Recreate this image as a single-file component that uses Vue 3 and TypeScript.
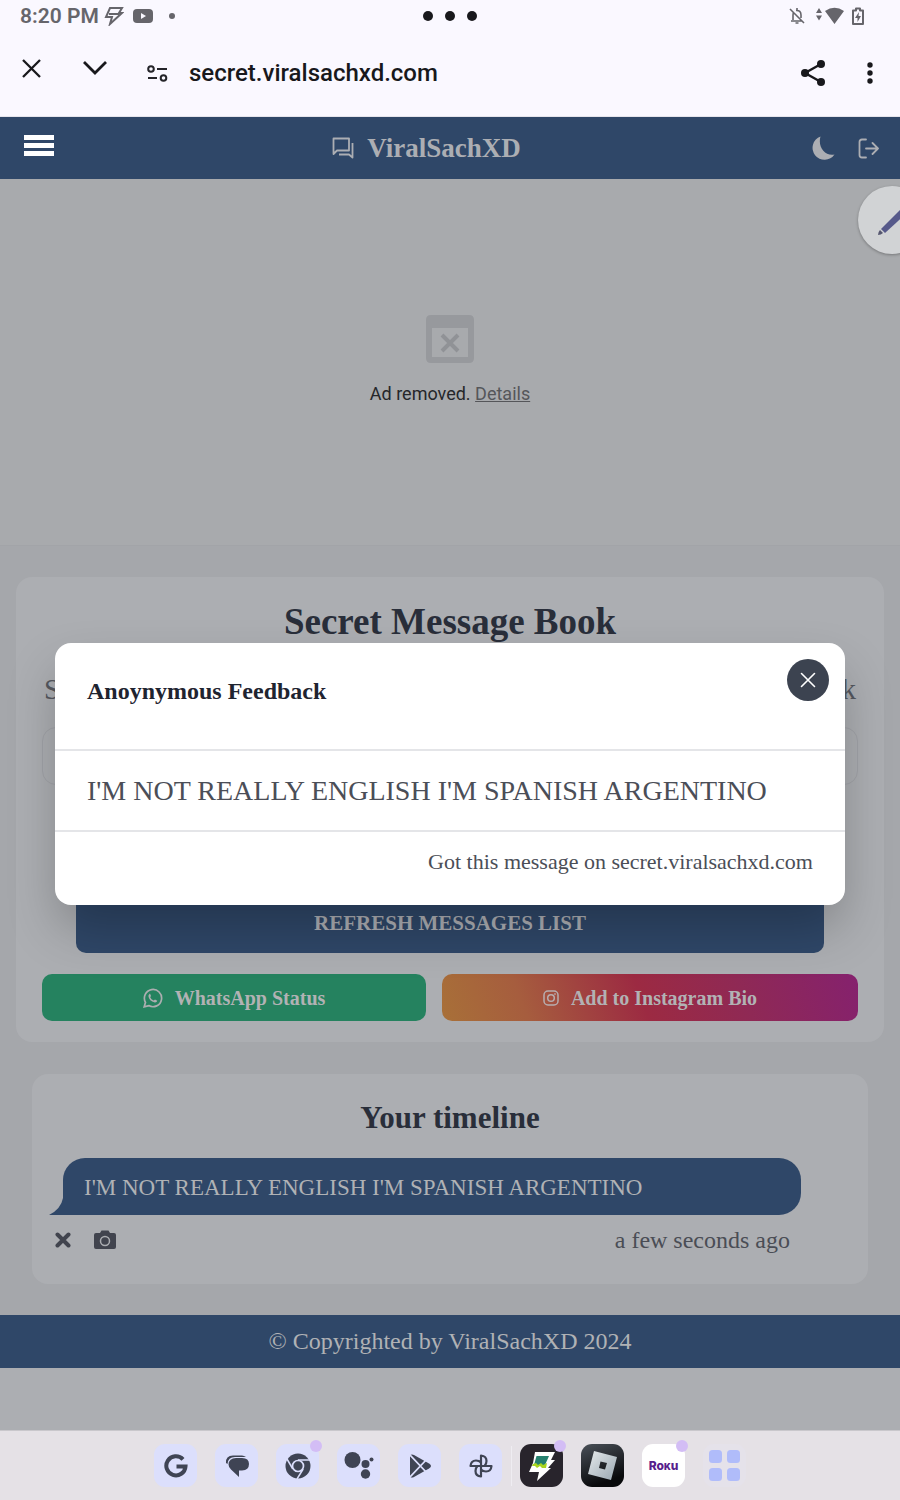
<script setup lang="ts">
import { ref } from 'vue'

const message = "I'M NOT REALLY ENGLISH I'M SPANISH ARGENTINO"
const site = 'secret.viralsachxd.com'
const modalOpen = ref(true)
const link = ref('')

interface DockApp {
  id: string
  label: string
  kind: 'plain' | 'dark' | 'metal' | 'white' | 'none'
  dot?: boolean
}

const apps: DockApp[] = [
  { id: 'google', label: 'Google', kind: 'plain' },
  { id: 'messages', label: 'Messages', kind: 'plain' },
  { id: 'chrome', label: 'Chrome', kind: 'plain', dot: true },
  { id: 'assistant', label: 'Assistant', kind: 'plain' },
  { id: 'play', label: 'Play Store', kind: 'plain' },
  { id: 'photos', label: 'Photos', kind: 'plain' },
  { id: 'bolt', label: 'Bolt', kind: 'dark', dot: true },
  { id: 'roblox', label: 'Roblox', kind: 'metal' },
  { id: 'roku', label: 'Roku', kind: 'white', dot: true },
  { id: 'all', label: 'All apps', kind: 'none' },
]
</script>

<template>
  <div class="screen">
    <header class="topbar">
      <div class="status">
        <div class="status-side">
          <span class="time">8:20 PM</span>
          <svg width="20" height="20" viewBox="0 0 20 20" fill="none" stroke="#66656b" stroke-width="2"><path d="M6 2h12l-3 5h3L6 18l2-7H2L6 2Z M5 8h10" /></svg>
          <svg class="tube" width="20" height="16" viewBox="0 0 20 16"><rect y="1" width="20" height="14" rx="4" fill="#66656b" /><path d="M8 5l5 3-5 3z" fill="#faf8ff" /></svg>
          <span class="tiny-dot"></span>
        </div>
        <div class="handle"><i></i><i></i><i></i></div>
        <div class="status-side right">
          <svg width="18" height="18" viewBox="0 0 18 18" fill="none" stroke="#66656b" stroke-width="1.600"><path d="M2 2l14 14M3 14h11M5 13V8q0-2 1-3M8 3.500Q13 3 13 8v3M9 1v2M7.500 16h3" /></svg>
          <svg class="wifi" width="28" height="18" viewBox="0 0 28 18" fill="#66656b"><path d="M3 1l3 5H0zM0 8.500h6l-3 5zM9 4q9.500-6.500 19 0L18.500 17z" /></svg>
          <svg width="12" height="18" viewBox="0 0 12 18"><path d="M4 1.500h4v2h3V17H1V3.500h3z" fill="none" stroke="#66656b" stroke-width="2" stroke-linejoin="round" /><path d="M7 5l-4 6h2.500v4L9 9H6.500z" fill="#66656b" /></svg>
        </div>
      </div>
      <div class="address">
        <button class="icon-btn close-tab" aria-label="Close tab">
          <svg width="19" height="19" viewBox="0 0 19 19" fill="none" stroke="#18181c" stroke-width="2.300"><path d="M1 1l17 17M18 1L1 18" /></svg>
        </button>
        <button class="icon-btn collapse" aria-label="Minimize">
          <svg width="24" height="14" viewBox="0 0 24 14" fill="none" stroke="#18181c" stroke-width="2.800"><path d="M1 1l11 11L23 1" /></svg>
        </button>
        <button class="icon-btn tune" aria-label="Site settings">
          <svg width="21" height="17" viewBox="0 0 21 17" fill="none" stroke="#242429" stroke-width="2"><circle cx="4" cy="4" r="2.800" /><path d="M10 4h10M1 13h9" /><circle cx="16.500" cy="13" r="2.800" /></svg>
        </button>
        <span class="url">{{ site }}</span>
        <button class="icon-btn share" aria-label="Share">
          <svg width="26" height="28" viewBox="0 0 26 28" fill="#18181c"><path d="M21 5L5 14l16 9" fill="none" stroke="#18181c" stroke-width="2.400" /><circle cx="21" cy="5" r="4" /><circle cx="5" cy="14" r="4" /><circle cx="21" cy="23" r="4" /></svg>
        </button>
        <button class="icon-btn" aria-label="More">
          <svg width="6" height="22" viewBox="0 0 6 22" fill="#18181c"><circle cx="3" cy="3" r="2.700" /><circle cx="3" cy="11" r="2.700" /><circle cx="3" cy="19" r="2.700" /></svg>
        </button>
      </div>
    </header>

    <div class="view">
      <nav class="navbar">
        <button class="icon-btn menu" aria-label="Menu">
          <svg width="30" height="21" viewBox="0 0 30 21" fill="#fff"><path d="M0 0h30v5H0zM0 8h30v5H0zM0 16h30v5H0z" /></svg>
        </button>
        <a class="brand" href="#">
          <svg width="23" height="22" viewBox="0 0 23 22" fill="none" stroke="#acaeb3" stroke-width="1.800" stroke-linejoin="round"><path d="M1.500 1.500h15.500v12H5l-3.500 3.500zM20.500 6v14.500L17 17.500H7" /></svg>
          <span>ViralSachXD</span>
        </a>
        <div class="nav-actions">
          <button class="icon-btn" aria-label="Dark mode">
            <svg width="24" height="25" viewBox="0 0 24 25" fill="#acaeb3"><path d="M9.500.5A12 12 0 1 0 23.500 18.500C14 20.500 6.500 11 9.500.5Z" /></svg>
          </button>
          <button class="icon-btn" aria-label="Log out">
            <svg width="21" height="21" viewBox="0 0 21 21" fill="none" stroke="#acaeb3" stroke-width="1.800" stroke-linejoin="round" stroke-linecap="round"><path d="M8 1.500H4q-2.500 0-2.500 2.500v13q0 2.500 2.500 2.500h4M8 10.500h12M14.500 5l5.500 5.500-5.500 5.500" /></svg>
          </button>
        </div>
      </nav>

      <section class="ad">
        <svg width="48" height="48" viewBox="0 0 48 48"><path fill-rule="evenodd" d="M5 0h38q5 0 5 5v38q0 5-5 5H5q-5 0-5-5V5q0-5 5-5zM6 13v29h36V13z" fill="#97999d" /><path d="M16 20l16 16M32 20L16 36" stroke="#909296" stroke-width="4" /></svg>
        <p>Ad removed. <a href="#">Details</a></p>
      </section>

      <main class="content">
        <section class="card book">
          <h1>Secret Message Book</h1>
          <p class="lead"><span>S</span><span>k</span></p>
          <input v-model="link" class="link" type="text" aria-label="Link" />
          <button class="refresh">REFRESH MESSAGES LIST</button>
          <div class="social">
            <button class="whatsapp">
              <svg width="20" height="20" viewBox="0 0 20 20" fill="none" stroke="#acaeb0" stroke-width="1.700"><path d="M1.200 18.800l1.300-4.500A8.600 8.600 0 1 1 5.800 17.600z" /><path d="M7 5.500l1 2.500-.8 1.200q1 2.200 3.500 3.400L12 11.500l2.300 1.200q-.5 2-2.500 1.800Q6 13 5.400 8q0-1.500 1.600-2.500z" fill="#acaeb0" stroke="none" /></svg>
              <span>WhatsApp Status</span>
            </button>
            <button class="instagram">
              <svg width="16" height="16" viewBox="0 0 16 16" fill="none" stroke="#b8aeb0" stroke-width="1.500"><rect x="1" y="1" width="14" height="14" rx="4" /><circle cx="8" cy="8" r="3.300" /><circle cx="12" cy="4" r=".5" fill="#b8aeb0" stroke-width=".8" /></svg>
              <span>Add to Instagram Bio</span>
            </button>
          </div>
        </section>

        <section class="card timeline">
          <h2>Your timeline</h2>
          <div class="bubble">
            {{ message }}
            <svg class="tail" width="20" height="30" viewBox="0 0 20 30"><path d="M14 0v13Q12 24 0 30h20V0z" fill="#2f4768" /></svg>
          </div>
          <div class="meta">
            <button class="icon-btn" aria-label="Delete">
              <svg width="16" height="16" viewBox="0 0 16 16" fill="none" stroke="#41444e" stroke-width="4" stroke-linecap="round"><path d="M2.500 2.500l11 11M13.500 2.500l-11 11" /></svg>
            </button>
            <button class="icon-btn" aria-label="Screenshot">
              <svg width="22" height="20" viewBox="0 0 22 20"><path d="M2 3h4l1.500-2.500h7L16 3h4q2 0 2 2v12q0 2-2 2H2q-2 0-2-2V5q0-2 2-2z" fill="#41444e" /><circle cx="11" cy="11" r="4.500" fill="none" stroke="#acaeb2" stroke-width="1.500" /></svg>
            </button>
            <time>a few seconds ago</time>
          </div>
        </section>
      </main>

      <footer class="footer">© Copyrighted by ViralSachXD 2024</footer>

      <button class="floating" aria-label="Edit">
        <svg width="34" height="34" viewBox="0 0 34 34"><path d="M1 32q0-3 2-5l3 3q-2 2-5 2z" fill="#55566f" /><path d="M4 26L28 2l5 5L8 30z" fill="#56598a" /></svg>
      </button>

      <div v-if="modalOpen" class="overlay">
        <div class="modal" role="dialog" aria-labelledby="modal-title">
          <div class="modal-head">
            <h3 id="modal-title">Anoynymous Feedback</h3>
            <button class="modal-close" aria-label="Close" @click="modalOpen = false">
              <svg width="16" height="16" viewBox="0 0 16 16" fill="none" stroke="#fff" stroke-width="1.600" stroke-linecap="round"><path d="M1.500 1.500l13 13M14.500 1.500l-13 13" /></svg>
            </button>
          </div>
          <p class="modal-body">{{ message }}</p>
          <p class="modal-foot">Got this message on {{ site }}</p>
        </div>
      </div>
    </div>

    <div class="dock">
      <button v-for="app in apps" :key="app.id" class="app" :class="app.kind" :aria-label="app.label">
        <svg v-if="app.id === 'google'" width="24" height="24" viewBox="0 0 24 24"><path d="M19 5.300A9.600 9.600 0 1 0 21.500 12.500H12.500" fill="none" stroke="#3f4454" stroke-width="4" /></svg>
        <svg v-else-if="app.id === 'messages'" width="24" height="24" viewBox="0 0 24 24"><path d="M11 4h6q7 0 7 6t-7 6.500h-3V23l-8-7.500Q3.500 13 3.500 10.500 4 4 11 4z" fill="#3f4454" /><path d="M1 9Q.5 1.500 8 1.500h9q2 0 4 1.500H10Q3 3 2.500 10z" fill="#3f4454" /></svg>
        <svg v-else-if="app.id === 'chrome'" width="26" height="26" viewBox="0 0 26 26"><circle cx="13" cy="13" r="12.500" fill="#3f4454" /><path d="M13 7h12M7.800 16L2 6M18.200 16L12 26" stroke="#dcdffc" stroke-width="1.500" /><circle cx="13" cy="13" r="5.500" fill="#3f4454" stroke="#dcdffc" stroke-width="1.700" /></svg>
        <svg v-else-if="app.id === 'assistant'" width="30" height="27" viewBox="0 0 30 27" fill="#3f4454"><circle cx="8.500" cy="8" r="8" /><circle cx="21.500" cy="12" r="4" /><circle cx="27.500" cy="7.500" r="2" /><circle cx="21.500" cy="22" r="4.700" /></svg>
        <svg v-else-if="app.id === 'play'" width="22" height="24" viewBox="0 0 22 24"><path d="M1 1q2-1 4 0l15 8.500q4 2.500 0 5L5 23q-2 1-4 0z" fill="#3f4454" /><path d="M0 0l18 19M0 24L18 5" stroke="#dcdffc" stroke-width="1.800" /></svg>
        <svg v-else-if="app.id === 'photos'" width="24" height="24" viewBox="0 0 24 24" fill="none" stroke="#3f4454" stroke-width="2.200" stroke-linejoin="round"><path d="M12 12V1.500q5.500.5 5.500 5.500 0 3-2 5M12 12h10.500q-.5 5.500-5.500 5.500-3 0-5-2M12 12v10.500q-5.500-.5-5.500-5.500 0-3 2-5M12 12H1.500Q2 6.500 7 6.500q3 0 5 2" /></svg>
        <svg v-else-if="app.id === 'bolt'" width="28" height="30" viewBox="0 0 28 30"><path d="M7 1h20l-4 8h4l-7 8h3L9 30l2-9H1l4-9z" fill="#fff" /><path d="M8.500 5H21l-4 9H6z" fill="#25806f" /><path d="M5 13l3-1 2 2 3-2 2 2 4-2-1 5h-4l-2-2-3 2-2-2H4z" fill="#a9d51f" /></svg>
        <svg v-else-if="app.id === 'roblox'" width="31" height="31" viewBox="0 0 31 31"><defs><linearGradient id="steel" x1="0" y1="0" x2="1" y2="1"><stop offset="0" stop-color="#e6eaec" /><stop offset="1" stop-color="#98a6b0" /></linearGradient></defs><path fill-rule="evenodd" d="M7 1l23 6-6 23-23-6zM13.500 11.500l-1.500 6.500 6 1.500 2-6.500z" fill="url(#steel)" /></svg>
        <span v-else-if="app.id === 'roku'" class="roku-name">Ro<b>K</b>u</span>
        <svg v-else width="31" height="31" viewBox="0 0 31 31" fill="#b0bcfa"><rect width="13" height="13" rx="3.500" /><rect x="18" width="13" height="13" rx="3.500" /><rect y="18" width="13" height="13" rx="3.500" /><rect x="18" y="18" width="13" height="13" rx="3.500" /></svg>
        <i v-if="app.dot" class="badge"></i>
      </button>
    </div>
  </div>
</template>

<style>
body {
  margin: 0;
  background: #aeb0b4;
}
</style>

<style scoped>
* {
  box-sizing: border-box;
}
.screen {
  display: flex;
  flex-direction: column;
  min-height: 100vh;
  overflow: hidden;
  font-family: "Liberation Serif", serif;
  background: #acaeb2;
}
h1, h2, h3, p {
  margin: 0;
}
button {
  font-family: inherit;
  border: 0;
  padding: 0;
  cursor: pointer;
}
svg {
  display: block;
  flex: none;
}
.icon-btn {
  background: none;
}

.topbar {
  background: #faf8ff;
  font-family: Roboto, sans-serif;
  padding-bottom: 16px;
  border-bottom: 1px solid #e6e5ec;
}
.status {
  display: grid;
  grid-template-columns: 1fr auto 1fr;
  align-items: center;
  height: 32px;
  padding: 0 20px;
}
.status-side {
  display: flex;
  align-items: center;
}
.time {
  font-size: 21px;
  font-weight: 600;
  color: #66656b;
  margin-right: 5px;
}
.tube {
  margin: 0 16px 0 9px;
}
.tiny-dot {
  width: 6px;
  height: 6px;
  border-radius: 50%;
  background: #66656b;
}
.handle {
  display: flex;
  gap: 12px;
}
.handle i {
  width: 10px;
  height: 10px;
  border-radius: 50%;
  background: #18181c;
}
.right {
  justify-content: flex-end;
  padding-right: 16px;
}
.wifi {
  margin: 0 8px 0 10px;
}
.address {
  display: flex;
  align-items: center;
  height: 68px;
  padding: 14px 27px 0 22px;
}
.close-tab {
  margin: 0 42px 10px 0;
}
.collapse {
  margin: 0 40px 10px 0;
}
.tune {
  margin-right: 21px;
}
.url {
  flex: 1;
  font-size: 24px;
  font-weight: 500;
  color: #18181c;
}
.share {
  margin-right: 41px;
}

.view {
  position: relative;
  flex: 1;
}
.navbar {
  display: flex;
  align-items: center;
  justify-content: space-between;
  height: 62px;
  padding: 0 21px 0 24px;
  background: #2f4768;
}
.brand {
  display: flex;
  align-items: center;
  gap: 12px;
  margin-right: 12px;
  font-size: 27px;
  font-weight: 700;
  color: #acaeb3;
  text-decoration: none;
}
.menu {
  padding-bottom: 5px;
}
.nav-actions {
  display: flex;
  align-items: center;
  gap: 23px;
}

.ad {
  display: flex;
  flex-direction: column;
  align-items: center;
  gap: 20px;
  padding: 136px 0 141px;
  background: #a8aaad;
  border-bottom: 1px solid #a2a4a8;
  font: 18px/21px Roboto, sans-serif;
  color: #25262a;
}
.ad a {
  color: #55565a;
}

.content {
  padding: 31px 16px;
  background: #a5a7ab;
}
.card {
  background: #acaeb2;
  border-radius: 16px;
}
.book {
  padding: 22px 26px 21px;
}
h1 {
  font-size: 37px;
  line-height: 46px;
  text-align: center;
  color: #292e3a;
}
.lead {
  display: flex;
  justify-content: space-between;
  margin-top: 24px;
  padding: 0 2px;
  font-size: 29px;
  line-height: 40px;
  color: #55585f;
}
.link {
  display: block;
  width: 100%;
  height: 58px;
  margin: 18px 0 108px;
  border: 1px solid #a1a3a8;
  border-radius: 14px;
  background: transparent;
}
.refresh {
  display: block;
  width: calc(100% - 68px);
  height: 60px;
  margin: 0 auto 21px;
  border-radius: 10px;
  background: #2f4768;
  color: #acaeb3;
  font-size: 21px;
  font-weight: 700;
}
.social {
  display: grid;
  grid-template-columns: 12fr 13fr;
  gap: 16px;
}
.social button {
  display: flex;
  align-items: center;
  justify-content: center;
  gap: 12px;
  height: 47px;
  border-radius: 10px;
  font-size: 20px;
  font-weight: 700;
  color: #b2b2b4;
}
.social span {
  padding-top: 2px;
}
.whatsapp {
  background: #25825f;
}
.instagram {
  background: linear-gradient(70deg, #a87038 0%, #a65d3e 20%, #9c2a42 48%, #8f2955 72%, #85216e 100%);
}

.timeline {
  margin: 32px 16px 0;
  padding: 24px 67px 28px 17px;
}
h2 {
  margin: 0 -50px 0 0;
  font-size: 31px;
  line-height: 40px;
  text-align: center;
  color: #292e3a;
}
.bubble {
  position: relative;
  margin: 20px 0 0 14px;
  padding: 16px 21px 14px;
  border-radius: 22px 22px 22px 0;
  background: #2f4768;
  color: #b0b2b5;
  font-size: 23px;
  line-height: 27px;
}
.tail {
  position: absolute;
  left: -14px;
  bottom: 0;
}
.meta {
  display: flex;
  align-items: center;
  gap: 23px;
  margin-top: 9px;
  padding: 0 11px 0 6px;
}
.meta time {
  flex: 1;
  text-align: right;
  font-size: 24px;
  line-height: 32px;
  color: #4a4d55;
}
.footer {
  padding: 12px 0;
  background: #2f4768;
  color: #b0b2b5;
  font-size: 24px;
  line-height: 29px;
  text-align: center;
}

.floating {
  position: absolute;
  top: 69px;
  right: -26px;
  width: 68px;
  height: 68px;
  padding-left: 19px;
  border-radius: 50%;
  background: #d1d3d5;
  box-shadow: 0 1px 3px rgba(0, 0, 0, 0.3);
}
.overlay {
  position: absolute;
  inset: 0;
  display: flex;
  align-items: center;
  padding: 0 55px;
}
.modal {
  width: 100%;
  border-radius: 16px;
  background: #fff;
  box-shadow: 0 25px 50px -4px rgba(0, 0, 0, 0.25);
}
.modal-head {
  display: flex;
  justify-content: space-between;
  height: 108px;
  padding: 16px 16px 0 32px;
  border-bottom: 2px solid #e4e5e8;
}
h3 {
  padding-top: 16px;
  font-size: 24px;
  line-height: 32px;
  color: #1f2430;
}
.modal-close {
  display: grid;
  place-items: center;
  width: 42px;
  height: 42px;
  border-radius: 50%;
  background: #3c4350;
}
.modal-body {
  padding: 21px 32px;
  border-bottom: 2px solid #e4e5e8;
  font-size: 28px;
  line-height: 37px;
  color: #4b4e57;
}
.modal-foot {
  padding: 15px 32px 28px;
  text-align: right;
  font-size: 22px;
  line-height: 30px;
  color: #4b4e57;
}

.dock {
  display: flex;
  align-items: center;
  justify-content: center;
  gap: 18px;
  height: 70px;
  background: #e5e1e6;
  border-top: 1px solid #c9c7cc;
}
.app {
  position: relative;
  display: grid;
  place-items: center;
  width: 43px;
  height: 43px;
  border-radius: 11px;
}
.plain {
  background: #dcdffc;
}
.dark {
  background: #28242c;
}
.dark::before {
  content: "";
  position: absolute;
  left: -9px;
  width: 1px;
  height: 40px;
  background: #efedf2;
}
.metal {
  background: linear-gradient(160deg, #4a5059, #08090b 80%);
}
.white {
  background: #fff;
}
.none {
  background: #e5e2ea;
}
.badge {
  position: absolute;
  top: -4px;
  right: -3px;
  width: 12px;
  height: 12px;
  border-radius: 50%;
  background: #d3bdf5;
}
.roku-name {
  font: 800 12px Inter, sans-serif;
  color: #57208c;
}
.roku-name b {
  font-size: 9px;
}
</style>
